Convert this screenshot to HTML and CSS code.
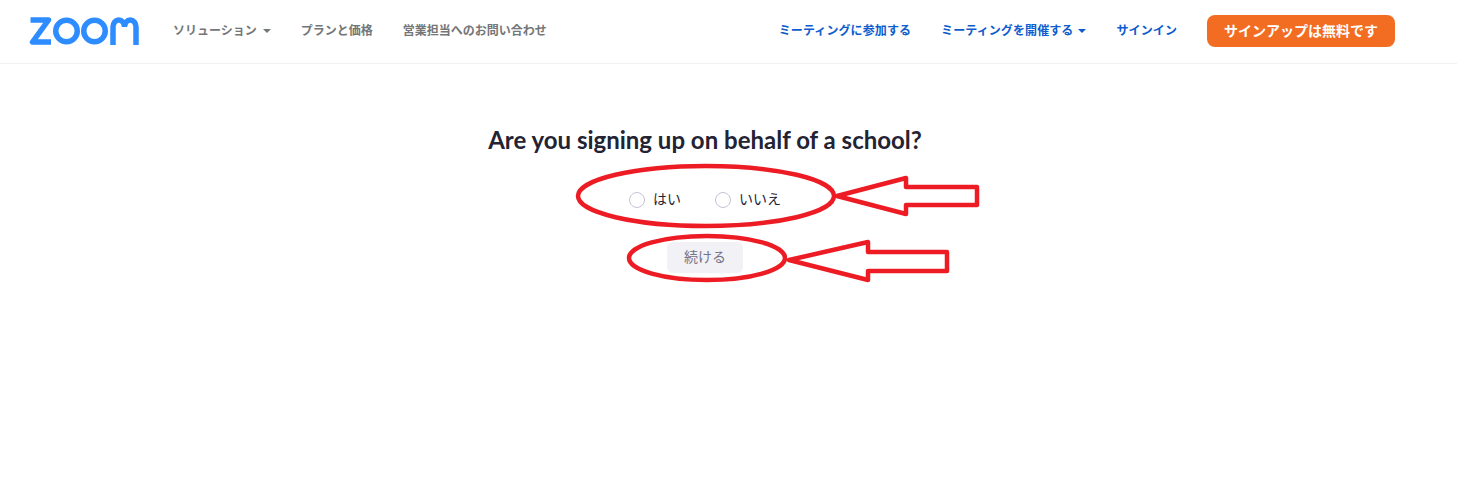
FILE: index.html
```html
<!DOCTYPE html>
<html lang="ja">
<head>
  <meta charset="UTF-8">
  <title>Zoom サインアップ</title>
  <link rel="stylesheet" href="styles.css">
</head>
<body>
<header class="topbar">
  <svg class="logo" viewBox="0 0 110 28" aria-label="zoom">
    <path class="logo-z" d="M1.5 3H19.5L3.5 25H22" />
    <circle class="logo-o" cx="37.5" cy="14" r="10.75" />
    <circle class="logo-o" cx="65.5" cy="14" r="10.75" />
    <path class="logo-m" d="M84 28V10A5.75 7 0 0 1 95.5 10A5.75 7 0 0 1 107 10V28" />
  </svg>
  <nav class="nav nav-left">
    <a href="#">ソリューション<span class="caret"></span></a>
    <a href="#">プランと価格</a>
    <a href="#">営業担当へのお問い合わせ</a>
  </nav>
  <nav class="nav nav-right">
    <a href="#">ミーティングに参加する</a>
    <a href="#">ミーティングを開催する<span class="caret"></span></a>
    <a href="#">サインイン</a>
    <a href="#" class="signup">サインアップは無料です</a>
  </nav>
</header>

<main class="content">
  <h1>Are you signing up on behalf of a school?</h1>
  <div class="choices">
    <label class="choice"><span class="radio"></span>はい</label>
    <label class="choice"><span class="radio"></span>いいえ</label>
  </div>
  <button class="next">続ける</button>
</main>

<!-- 赤い注釈 -->
<svg class="marks" width="1457" height="492">
  <ellipse cx="706" cy="196" rx="128" ry="30" />
  <ellipse cx="707" cy="258" rx="78" ry="22" />
  <path d="M837 196L906 178V187H977V205H906V214Z" />
  <path d="M789 260L868 242V252H947V271H868V280Z" />
</svg>
</body>
</html>
```

FILE: styles.css
```css
* { box-sizing: border-box; }
body {
  font-family: 'Lato', 'Noto Sans CJK JP', sans-serif;
  background-color: #fff;
  margin: 0;
  padding: 0;
  height: 492px;
  overflow: hidden;
}
.topbar {
  display: flex;
  align-items: center;
  height: 64px;
  padding: 0 62px 2px 29px;
  border-bottom: 1px solid #f1f1f1;
}
.logo {
  width: 110px;
  height: 28px;
  margin-right: 34px;
}
.logo-z, .logo-o, .logo-m {
  fill: none;
  stroke: #2d8cff;
  stroke-width: 5.5;
}
.logo-z { stroke-linejoin: round; }
.nav {
  display: flex;
  align-items: center;
  gap: 30px;
  font-family: 'Noto Sans CJK JP', sans-serif;
  font-size: 12px;
  font-weight: 700;
  line-height: 18px;
}
.nav a {
  padding-bottom: 2px;
  text-decoration: none;
  white-space: nowrap;
}
.nav-left a { color: #747678; }
.nav-left .caret { margin-left: 6px; }
.nav-right { margin-left: auto; }
.nav-right a { color: #0e5ccd; letter-spacing: 0.1px; }
.caret {
  display: inline-block;
  margin-left: 5px;
  vertical-align: middle;
  border-top: 4px solid currentColor;
  border-left: 4px solid transparent;
  border-right: 4px solid transparent;
}
.nav-right .signup {
  padding: 0 17px;
  height: 32px;
  font-size: 14px;
  line-height: 31px;
  letter-spacing: 0;
  color: #fff;
  background-color: #f26d21;
  border-radius: 8px;
}
.content {
  display: flex;
  flex-direction: column;
  align-items: center;
  width: 1410px;
}
h1 {
  margin: 60px 0 0;
  font-size: 24px;
  font-weight: 700;
  line-height: 32px;
  color: #232333;
}
.choices {
  display: flex;
  gap: 34px;
  margin-top: 27px;
  height: 30px;
  align-items: center;
}
.choice {
  display: flex;
  align-items: center;
  gap: 8px;
  font-family: 'Noto Sans CJK JP', sans-serif;
  font-size: 14px;
  color: #232333;
}
.radio {
  width: 16px;
  height: 16px;
  margin-top: 4px;
  border: 1px solid #c4c4d6;
  border-radius: 50%;
  background-color: #fff;
}
.next {
  margin-top: 29px;
  width: 76px;
  height: 31px;
  padding: 0 0 3px;
  font-family: 'Noto Sans CJK JP', sans-serif;
  font-size: 14px;
  color: #747487;
  background-color: #f1f1f6;
  border: 0;
  border-radius: 6px;
}
.marks {
  position: absolute;
  top: 0;
  left: 0;
}
.marks ellipse, .marks path {
  fill: none;
  stroke: #ed1c24;
  stroke-width: 4.5;
  stroke-linejoin: round;
}
```
